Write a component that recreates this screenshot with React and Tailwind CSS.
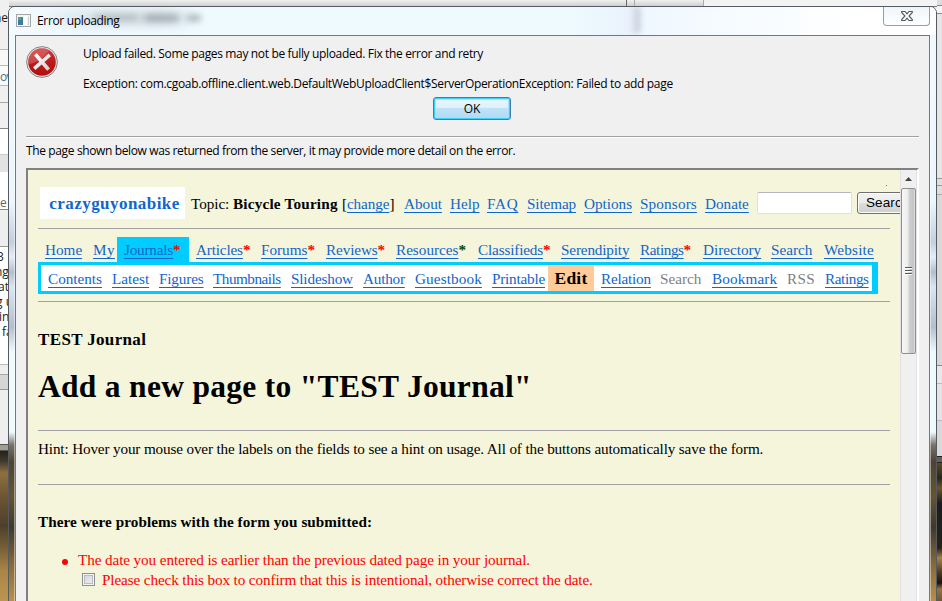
import React from "react";

const topLinks = [
  ["About", "w-[46px]"],
  ["Help", "w-[37px]"],
  ["FAQ", "w-[40px] tracking-[0.7px]"],
  ["Sitemap", "w-[57px] tracking-[-0.1px]"],
  ["Options", "w-[56px]"],
  ["Sponsors", "w-[65px] tracking-[0.15px]"],
  ["Donate", "w-[52px]"],
];

const siteLinks = [
  ["Articles", "w-[65px] tracking-[-0.15px]", "text-[#ff0000]"],
  ["Forums", "w-[65px]", "text-[#ff0000]"],
  ["Reviews", "w-[70px] tracking-[-0.1px]", "text-[#ff0000]"],
  ["Resources", "w-[82px]", "text-[#004d00]"],
  ["Classifieds", "w-[83px] tracking-[-0.15px]", "text-[#ff0000]"],
  ["Serendipity", "w-[79px] tracking-[-0.15px]", ""],
  ["Ratings", "w-[63px] tracking-[-0.4px]", "text-[#ff0000]"],
  ["Directory", "w-[68px]", ""],
  ["Search", "w-[53px]", ""],
  ["Website", "w-[54px] tracking-[0.2px]", ""],
];

const journalLinks = [
  ["Contents", "w-[64px]"],
  ["Latest", "w-[47px]"],
  ["Figures", "w-[54px] tracking-[-0.15px]"],
  ["Thumbnails", "w-[78px] tracking-[-0.48px]"],
  ["Slideshow", "w-[72px] tracking-[-0.15px]"],
  ["Author", "w-[52px] tracking-[-0.2px]"],
  ["Guestbook", "w-[77px] tracking-[0.12px]"],
  ["Printable", "w-[56px] tracking-[-0.2px]"],
];

const serif = "font-['Liberation_Serif',serif]";
const sans = "font-['Open_Sans','Noto_Sans',sans-serif]";

function Link({ children }) {
  return (
    <a className="text-[#0f66cc] underline decoration-1 underline-offset-[3px] [text-decoration-skip-ink:none]">
      {children}
    </a>
  );
}

function Rule() {
  return <div className="h-px w-[852px] shrink-0 bg-[#a0a0a4]" />;
}

function ErrorIcon() {
  return (
    <svg className="block size-8 shrink-0" viewBox="0 0 32 32">
      <defs>
        <linearGradient id="red" x1="0" y1="0" x2="0" y2="1">
          <stop offset="0" stopColor="#cf3a3a" />
          <stop offset="0.5" stopColor="#bd1a1a" />
          <stop offset="1" stopColor="#b01010" />
        </linearGradient>
        <linearGradient id="cross" x1="0" y1="0" x2="1" y2="1">
          <stop offset="0" stopColor="#fff" />
          <stop offset="1" stopColor="#d4d4d4" />
        </linearGradient>
      </defs>
      <circle cx="16" cy="16" r="15.4" fill="#e4e4e4" stroke="#858585" strokeWidth="1" />
      <circle cx="16" cy="16" r="13.8" fill="url(#red)" />
      <path d="M3 18A13 13 0 0 1 23 4.4Q15 16 3 18Z" fill="#e08080" opacity=".45" />
      <path d="M10.6 9.6l10.8 12.6M22.4 10.2L9.6 21.4" stroke="url(#cross)" strokeWidth="3.7" strokeLinecap="square" fill="none" />
    </svg>
  );
}

function Backdrop() {
  return (
    <div className="flex h-full w-full justify-between bg-[#ececec]">
      <div className="flex w-[9px] flex-col overflow-hidden whitespace-nowrap bg-[#f0f0f0] text-xs leading-[15px] font-['Open_Sans',sans-serif]">
        <div className="h-[49px] shrink-0 pt-[10px]"><span className="-ml-[6px] text-[#222]">ne</span></div>
        <div className="h-[17px] shrink-0 border-y border-[#b9b9b9] bg-[#f8f8f8]" />
        <div className="h-[20px] shrink-0 border-b border-[#b9b9b9] bg-[#fafafa] pt-[3px] tracking-[-0.8px] text-[#44708d]">ov</div>
        <div className="h-[17px] shrink-0 border-b border-[#a8a8a8]" />
        <div className="h-[26px] shrink-0 border-b border-[#888] bg-[#f0f0f0]" />
        <div className="h-[25px] shrink-0 bg-white" />
        <div className="h-[18px] shrink-0 border-t border-[#ccc] bg-[#e2e2e2]" />
        <div className="h-[38px] shrink-0 border-b border-[#888] bg-white pt-[23px] text-[#666]">e</div>
        <div className="h-[37px] shrink-0 border-b border-[#999] bg-[#eee]" />
        <div className="h-[118px] shrink-0 border-b border-[#bbb] bg-white pt-[2px] text-[#222]">
          <div className="-ml-[3px]">3</div>
          <div className="-ml-[5px]">ng</div>
          <div className="-ml-[2px]">at</div>
          <div className="-ml-[4px]">g u</div>
          <div className="-ml-px">in</div>
          <div className="pl-[2px]">fa</div>
        </div>
        <div className="h-[10px] shrink-0 border-b border-[#aaa] bg-[#eee]" />
        <div className="h-[15px] shrink-0 border-b border-[#999] bg-[#d6d6d6]" />
        <div className="h-[54px] shrink-0 bg-[#eee]" />
        <div className="h-[7px] shrink-0 border-y border-[#555] bg-[#a29d8d]" />
        <div className="grow bg-[linear-gradient(180deg,#25221b_0,#3f382b_10px,#8d7040_22px,#6d5633_45px,#4d402b_75px,#7e6438_100px,#a98647_120px,#bd9551_100%)]" />
      </div>
      <div className="flex w-[6px] flex-col bg-[#dedede]">
        <div className="h-[6px] shrink-0 border-b border-[#888]" />
        <div className="h-[8px] shrink-0 border-b border-[#888] bg-[#f4f4f4]" />
        <div className="h-[165px] shrink-0 border-b border-[#999] bg-[#e6e6e6]" />
        <div className="h-[7px] shrink-0 border-b border-[#999]" />
        <div className="h-[9px] shrink-0 border-b border-[#aaa]" />
        <div className="h-[171px] shrink-0 border-b border-[#888] bg-[#d8d8d8]" />
        <div className="h-[18px] shrink-0 border-b border-[#b8bac8] bg-[#e8e8e8]" />
        <div className="h-[37px] shrink-0 border-b border-[#b8bac8] bg-[#e4e4e4]" />
        <div className="h-[35px] shrink-0 bg-[#d8d8d8]" />
        <div className="h-[7px] shrink-0 border-y border-[#222] bg-[#66604f]" />
        <div className="grow bg-[linear-gradient(180deg,#5a4a2c_0,#2a251b_15px,#6b552f_25px,#1d1c19_40px,#26231c_85px,#a58145_95px,#463920_110px,#16150f_120px,#947342_126px,#6b5636_100%)]" />
      </div>
    </div>
  );
}

function TitleBar() {
  return (
    <div className="relative flex h-[28px] shrink-0 items-start overflow-hidden rounded-t-[6px] bg-[linear-gradient(90deg,#f6fafe_0,#effaff_60px,#effaff_560px,#e9f2fc_622px,#f0f8ff_640px,#fafdff_780px,#fff_850px)] pl-[7px]">
      <div className="absolute left-[30px] top-[3px] h-[16px] w-[160px] bg-[linear-gradient(90deg,transparent,#c9d2da_40%,#c3ccd4_80%,transparent)] opacity-70 blur-[4px]" />
      <div className="absolute left-[86px] top-[8px] h-[5px] w-[42px] bg-[#8f979e] opacity-50 blur-[3px]" />
      <div className="absolute left-[136px] top-[8px] h-[6px] w-[34px] bg-[#7f878e] opacity-60 blur-[3px]" />
      <div className="absolute left-[178px] top-[8px] h-[6px] w-[14px] bg-[#7f878e] opacity-60 blur-[3px]" />
      <div className="absolute left-[624px] top-0 h-[26px] w-[8px] bg-[#d0d7e3] blur-[2.5px]" />
      <svg className="relative mt-[7px] block h-[13px] w-[15px] shrink-0" viewBox="0 0 15 13">
        <rect x=".5" y=".5" width="14" height="12" fill="#f4f4f4" stroke="#a4a8ac" />
        <rect x="2" y="3" width="5" height="8" fill="#3f8f94" />
        <path d="M2 11V7l5-3v7z" fill="#417a9f" />
        <path d="M2 3h3v3H2z" fill="#4da382" />
        <rect x="8" y="2" width="3" height="9" fill="#fff" />
        <rect x="12" y="3" width="1" height="8" fill="#c8d4d4" />
      </svg>
      <span className={`relative ml-[6px] mt-[5px] text-xs leading-[17px] tracking-[-0.34px] text-black ${sans}`}>Error uploading</span>
      <button className="relative ml-auto mr-[6px] flex h-[19px] w-[47px] items-center justify-center rounded-b-[4px] border border-t-0 border-[#9b9fa3] bg-[linear-gradient(180deg,#eef6fb,#fff)]">
        <svg className="block h-[10px] w-[12px]" viewBox="0 0 12 10">
          <path d="M.7.5H4L6 2.8 8 .5h3.3v1L8 5l3.3 3.5v1H8L6 7.2 4 9.5H.7v-1L4 5 .7 1.5z" fill="#fff" stroke="#55595e" strokeWidth="1.1" />
        </svg>
      </button>
    </div>
  );
}

function Message() {
  return (
    <div className={`flex flex-col px-[10px] text-xs leading-[15px] text-black ${sans}`}>
      <div className="flex h-[100px] pt-[10px]">
        <ErrorIcon />
        <div className="ml-[25px] flex flex-col whitespace-nowrap">
          <p className="h-[30px] w-fit tracking-[-0.35px]">Upload failed. Some pages may not be fully uploaded. Fix the error and retry</p>
          <p className="h-[21px] w-fit tracking-[-0.325px]">Exception: com.cgoab.offline.client.web.DefaultWebUploadClient$ServerOperationException: Failed to add page</p>
          <button className="ml-[350px] flex h-[23px] w-[78px] items-center justify-center rounded-[3px] border border-[#3c7fb1] bg-[linear-gradient(180deg,#eaf6fd_0,#dff1fb_45%,#bfe2f6_50%,#b0daf5_100%)] shadow-[inset_0_0_0_1px_#3fcdfa,inset_0_0_1px_2px_#a0e4fc]">
            OK
          </button>
        </div>
      </div>
      <div className="h-[2px] border-b border-white bg-[#a0a0a0]" />
      <p className="h-[30px] whitespace-nowrap pt-[5px] tracking-[-0.37px]">
        <span>The page shown below was returned from the server, it may provide more detail on the error.</span>
      </p>
    </div>
  );
}

function ScrollBar() {
  return (
    <div className="flex h-full w-[17px] shrink-0 flex-col border-x border-[#e2e2e2] bg-[#f0f0f0]">
      <div className="flex h-[18px] shrink-0 items-center justify-center">
        <svg className="block h-[4px] w-[7px]" viewBox="0 0 7 4">
          <path d="M0 4L3.5 0 7 4z" fill="#444" />
        </svg>
      </div>
      <div className="flex h-[166px] w-[15px] shrink-0 flex-col items-center justify-center gap-[1px] rounded-[2px] border border-[#8f8f8f] bg-[linear-gradient(90deg,#f7f7f7_0,#ececec_45%,#d0d0d2_55%,#c4c4c6_85%,#e0e0e0_100%)]">
        {[0, 1, 2].map((i) => (
          <div key={i} className="h-[2px] w-[7px] border-b border-white bg-[#55585c]" />
        ))}
      </div>
    </div>
  );
}

function Page() {
  return (
    <div className={`relative flex w-[872px] shrink-0 flex-col overflow-hidden whitespace-nowrap bg-[#f5f5dc] pl-[10px] text-[15.2px] leading-[18px] text-black ${serif}`}>
      <div className="absolute left-[858px] top-[15px] size-px bg-[#777]" />
      <div className="flex h-[58px] shrink-0 items-start pt-[17px]">
        <div className="ml-[2px] flex h-[32px] w-[145px] shrink-0 items-center justify-center bg-white pl-[4px] pt-px text-[17px] font-bold tracking-[0.45px] text-[#0f66cc]">crazyguyonabike</div>
        <div className="ml-[6px] mt-[8px] flex w-[213px] shrink-0">
          <span className="w-[42px] tracking-[-0.05px]">Topic:</span>
          <b className="w-[109px] tracking-[0.2px]">Bicycle Touring</b>
          <span className="tracking-[-0.1px]">[<Link>change</Link>]</span>
        </div>
        <div className="mt-[8px] flex shrink-0">
          {topLinks.map(([t, w]) => (
            <span key={t} className={`${w} shrink-0`}><Link>{t}</Link></span>
          ))}
        </div>
        <div className="mt-[5px] h-[22px] w-[95px] shrink-0 rounded-[2px] border border-[#dfe0e6] border-t-[#b4b7bd] bg-white" />
        <button className="ml-[5px] mt-[5px] flex h-[22px] w-[60px] shrink-0 items-center rounded-[3px] border border-[#707070] bg-[linear-gradient(180deg,#f2f2f2_0,#ebebeb_48%,#dddddd_52%,#cfcfcf_100%)] pl-[8px] text-[13.5px] tracking-[0.1px] shadow-[inset_0_0_0_1px_#fcfcfc] font-['Liberation_Sans',sans-serif]">Search</button>
      </div>
      <Rule />
      <div className="flex h-[33px] shrink-0 items-end">
        <span className="ml-[7px] h-[21px] w-[48px]"><Link>Home</Link></span>
        <span className="h-[21px] w-[24px] tracking-[0.4px]"><Link>My</Link></span>
        <span className="mr-[7px] h-[25px] w-[72px] bg-[#00ccff] pl-[7px] pt-[4px] tracking-[-0.2px]"><Link>Journals</Link><b className="text-[#ff0000]">*</b></span>
        {siteLinks.map(([t, w, star]) => (
          <span key={t} className={`${w} h-[21px] shrink-0`}>
            <Link>{t}</Link>
            {star && <b className={star}>*</b>}
          </span>
        ))}
      </div>
      <div className="flex h-[32px] w-[840px] shrink-0 border-[3px] border-r-[6px] border-[#00ccff] bg-white pl-[7px]">
        {journalLinks.map(([t, w]) => (
          <span key={t} className={`${w} shrink-0 pt-[5px]`}><Link>{t}</Link></span>
        ))}
        <b className="mr-[7px] flex w-[46px] shrink-0 items-center justify-center bg-[#ffcc99] text-[17.5px] tracking-[0.2px]">Edit</b>
        <span className="w-[59px] shrink-0 pt-[5px] tracking-[-0.2px]"><Link>Relation</Link></span>
        <span className="w-[52px] shrink-0 pt-[5px] text-[#808080]">Search</span>
        <span className="w-[75px] shrink-0 pt-[5px] tracking-[0.15px]"><Link>Bookmark</Link></span>
        <span className="w-[38px] shrink-0 pt-[5px] tracking-[0.3px] text-[#808080]">RSS</span>
        <span className="w-[44px] shrink-0 pt-[5px] tracking-[-0.4px]"><Link>Ratings</Link></span>
      </div>
      <div className="h-[7px] shrink-0" />
      <Rule />
      <h3 className="mt-[29px] h-[18px] shrink-0 text-[17px] font-bold tracking-[0.35px]">TEST Journal</h3>
      <h1 className="mt-[20px] h-[36px] shrink-0 text-[31.5px] font-bold leading-[36px] tracking-[0.3px]">Add a new page to "TEST Journal"</h1>
      <div className="h-[25px] shrink-0" />
      <Rule />
      <p className="mt-[9px] h-[44px] shrink-0 tracking-[-0.148px]">Hint: Hover your mouse over the labels on the fields to see a hint on usage. All of the buttons automatically save the form.</p>
      <Rule />
      <h4 className="mt-[28px] h-[18px] shrink-0 font-bold tracking-[0.06px]">There were problems with the form you submitted:</h4>
      <div className="mt-[20px] flex shrink-0 text-[#ff0000]">
        <div className="ml-[24px] mr-[10px] mt-[8px] size-[6px] rounded-full bg-[#ff0000]" />
        <div className="leading-[20px] tracking-[-0.1px]">
          <div className="-mt-px"><span>The date you entered is earlier than the previous dated page in your journal.</span></div>
          <div className="flex">
            <div className="ml-[4px] mr-[7px] mt-[3px] size-[13px] border border-[#8e8f8f] bg-[linear-gradient(135deg,#cbcfd5,#f6f6f6)] shadow-[inset_0_0_0_1px_#f4f4f4,inset_0_0_0_2px_#b8bcc4]" />
            <span className="tracking-[-0.115px]">Please check this box to confirm that this is intentional, otherwise correct the date.</span>
          </div>
        </div>
      </div>
    </div>
  );
}

export default function App() {
  return (
    <div className="relative h-[601px] w-[942px] overflow-hidden">
      <Backdrop />
      <div className="absolute left-[9px] top-0 flex h-[7px] w-[928px] border-b border-[#777] bg-[linear-gradient(180deg,#f0f0f0,#cfcfcf)]">
        <div className="w-[618px] border-r border-[#666]" />
        <div className="ml-[7px] w-[70px] border-x border-[#aaa]" />
        <div className="grow bg-[#f3f3f3]" />
      </div>
      <div className="absolute left-[8px] top-[6px] flex h-[600px] w-[929px] flex-col rounded-t-[7px] border border-[#555b60] bg-[linear-gradient(180deg,#f2faff_0,#ecf6ff_195px,#c4cfdd_235px,#e4eefa_250px,#b4bfce_265px,#dce6f2_280px,#b4bfce_320px,#effaff_345px,#effaff_425px,#77726a_438px,#4c4433_455px,#655434_490px,#3e392e_520px,#8a6d3d_560px,#bd9551_600px)]">
        <TitleBar />
        <div className="mx-[6px] flex grow flex-col border border-[#74787c] bg-[#f0f0f0] shadow-[0_0_0_1px_rgba(255,255,255,0.45)]">
          <Message />
          <div className="ml-[10px] flex h-[440px] w-[893px] shrink-0 border-2 border-b-0 border-l-[#808080] border-r-white border-t-[#808080]">
            <Page />
            <ScrollBar />
          </div>
        </div>
      </div>
    </div>
  );
}
